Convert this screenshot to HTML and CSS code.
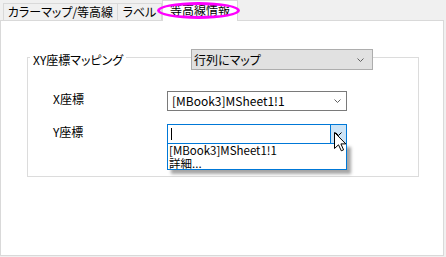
FILE: index.html
```html
<!DOCTYPE html>
<html>
<head>
  <title>等高線情報</title>
  <link rel="stylesheet" href="styles.css">
</head>
<body>
  <div class="window">
    <div class="tabs">
      <div class="tab tab-first">カラーマップ/等高線</div>
      <div class="tab tab-second">ラベル</div>
      <div class="tab tab-active">等高線情報</div>
    </div>

    <div class="panel">
      <div class="group">
        <div class="group-head">
          <span class="group-label">XY座標マッピング</span>
          <div class="combo combo-gray">
            <span class="combo-text">行列にマップ</span>
            <svg class="chev" width="7" height="4" viewBox="0 0 7 4"><polyline points="0.5,0.5 3.5,3.5 6.5,0.5"/></svg>
          </div>
        </div>

        <div class="rows">
          <div class="row">
            <span class="row-label">X座標</span>
            <div class="combo">
              <span class="combo-text">[MBook3]MSheet1!1</span>
              <svg class="chev" width="7" height="4" viewBox="0 0 7 4"><polyline points="0.5,0.5 3.5,3.5 6.5,0.5"/></svg>
            </div>
          </div>
          <div class="row">
            <span class="row-label">Y座標</span>
            <div class="combo combo-open">
              <span class="caret"></span>
              <span class="drop-btn">
                <svg class="chev" width="7" height="4" viewBox="0 0 7 4"><polyline points="0.5,0.5 3.5,3.5 6.5,0.5"/></svg>
              </span>
              <div class="drop-list">
                <div class="drop-item">[MBook3]MSheet1!1</div>
                <div class="drop-item">詳細...</div>
              </div>
            </div>
          </div>
        </div>
      </div>
    </div>

    <div class="highlight"></div>
    <svg class="cursor" width="13" height="20" viewBox="0 0 13 20">
      <path d="M0.5,0.5 L0.5,16.5 L4.5,12.8 L7.3,18.8 L9.6,17.8 L6.9,11.9 L11.8,11.9 Z"/>
    </svg>
  </div>
</body>
</html>
```

FILE: styles.css
```css
body {
  margin: 0;
  background: #f0f0f0;
  color: #000;
  font-family: "Liberation Sans Narrow", "Noto Sans CJK JP", sans-serif;
  font-size: 12px;
  font-feature-settings: "palt";
}
.window {
  position: relative;
  width: 446px;
  height: 257px;
}
.tabs {
  display: flex;
  align-items: flex-end;
  height: 20px;
  padding-left: 3px;
  position: relative;
  z-index: 1;
}
.tab {
  height: 17px;
  box-sizing: border-box;
  border: 1px solid #d9d9d9;
  border-bottom: none;
  background: #f0f0f0;
  text-align: center;
  line-height: 16px;
  white-space: nowrap;
}
.tab-first {
  width: 115px;
}
.tab-second {
  width: 44px;
  border-left: none;
}
.tab-active {
  width: 76px;
  height: 21px;
  margin-bottom: -1px;
  background: #fff;
  line-height: 18px;
}
.panel {
  width: 444px;
  height: 236px;
  box-sizing: border-box;
  border: 1px solid #d9d9d9;
  background: #fff;
  padding: 36px 0 0 26px;
}
.group {
  width: 392px;
  height: 120px;
  box-sizing: border-box;
  border: 1px solid #dcdcdc;
}
.group-head {
  display: flex;
  align-items: center;
  height: 21px;
  margin-top: -9px;
}
.group-label {
  margin-left: 2px;
  padding: 0 3px;
  background: #fff;
  line-height: 14px;
}
.combo {
  position: relative;
  display: flex;
  align-items: center;
  width: 180px;
  height: 20px;
  box-sizing: border-box;
  border: 1px solid #7a7a7a;
  background: #fff;
  padding-left: 4px;
}
.combo-text {
  flex: 1;
  line-height: 14px;
  white-space: nowrap;
}
.chev {
  margin-right: 5px;
  fill: none;
  stroke: #606060;
  stroke-width: 1;
}
.combo-gray {
  width: 182px;
  height: 21px;
  margin-left: auto;
  margin-right: 45px;
  background: #e1e1e1;
  border-color: #adadad;
  padding-left: 2px;
}
.combo-gray .chev {
  margin-right: 8px;
}
.rows {
  display: flex;
  flex-direction: column;
  gap: 13px;
  padding: 21px 0 0 25px;
}
.row {
  display: flex;
  align-items: flex-start;
}
.row-label {
  width: 114px;
  padding-top: 1px;
  line-height: 14px;
}
.combo-open {
  border-color: #0078d7;
  padding-left: 3px;
}
.caret {
  width: 1px;
  height: 12px;
  background: #000;
}
.drop-btn {
  display: flex;
  align-items: center;
  justify-content: center;
  align-self: stretch;
  width: 15px;
  margin-left: auto;
  background: #cce4f7;
  border-left: 1px solid #0078d7;
}
.drop-btn .chev {
  margin: 0;
  stroke: #000;
}
.drop-list {
  position: absolute;
  left: -1px;
  top: 18px;
  width: 180px;
  height: 27px;
  box-sizing: border-box;
  border: 1px solid #0078d7;
  background: #fff;
  box-shadow: 4px 4px 3px rgba(0, 0, 0, 0.35);
  z-index: 2;
}
.drop-item {
  font-size: 11.5px;
  line-height: 12.5px;
  padding-left: 1px;
  white-space: nowrap;
}
.highlight {
  position: absolute;
  left: 157px;
  top: 2px;
  width: 83px;
  height: 17px;
  box-sizing: border-box;
  border: 3px solid #ff00ff;
  border-radius: 50%;
  z-index: 3;
}
.cursor {
  position: absolute;
  left: 334px;
  top: 132px;
  z-index: 4;
  fill: #fff;
  stroke: #000;
  stroke-width: 1;
}
```
